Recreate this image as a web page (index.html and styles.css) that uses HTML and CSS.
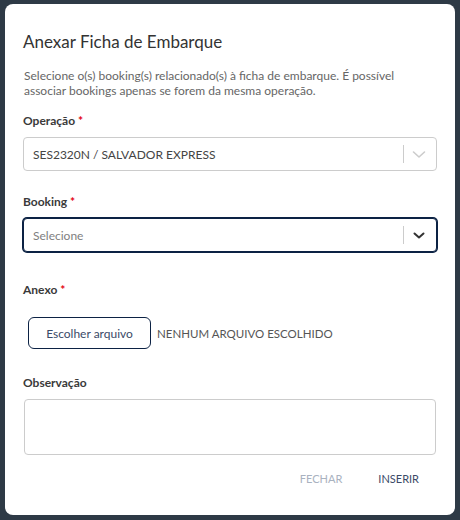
FILE: index.html
```html
<!DOCTYPE html>
<html lang="pt-BR">
<head>
  <meta charset="UTF-8">
  <meta name="viewport" content="width=device-width, initial-scale=1.0">
  <title>Anexar Ficha de Embarque</title>
  <link rel="stylesheet" href="styles.css">
</head>
<body>
  <div class="modal">
    <h2 class="modal-title">Anexar Ficha de Embarque</h2>
    <p class="modal-text">Selecione o(s) booking(s) relacionado(s) à ficha de embarque. É possível associar bookings apenas se forem da mesma operação.</p>

    <!-- Operação -->
    <div class="field">
      <label class="field-label">Operação <span class="required">*</span></label>
      <div class="select">
        <div class="select-value">SES2320N / SALVADOR EXPRESS</div>
        <span class="select-separator"></span>
        <div class="select-indicator">
          <svg width="20" height="20" viewBox="0 0 20 20"><polyline points="4.5,8 10,13 15.5,8" fill="none" stroke="#cccccc" stroke-width="1.6" stroke-linecap="round" stroke-linejoin="round"/></svg>
        </div>
      </div>
    </div>

    <!-- Booking -->
    <div class="field">
      <label class="field-label">Booking <span class="required">*</span></label>
      <div class="select select-focused">
        <div class="select-value placeholder">Selecione</div>
        <span class="select-separator"></span>
        <div class="select-indicator">
          <svg width="20" height="20" viewBox="0 0 20 20"><polyline points="5.5,8.5 10,12.5 14.5,8.5" fill="none" stroke="#333333" stroke-width="2" stroke-linecap="round" stroke-linejoin="round"/></svg>
        </div>
      </div>
    </div>

    <!-- Anexo -->
    <div class="field field-file">
      <label class="field-label">Anexo <span class="required">*</span></label>
      <div class="file-row">
        <button type="button" class="file-button">Escolher arquivo</button>
        <span class="file-name">NENHUM ARQUIVO ESCOLHIDO</span>
      </div>
    </div>

    <!-- Observação -->
    <div class="field field-obs">
      <label class="field-label">Observação</label>
      <textarea class="textarea"></textarea>
    </div>

    <div class="modal-actions">
      <button type="button" class="action action-disabled">FECHAR</button>
      <button type="button" class="action">INSERIR</button>
    </div>
  </div>
</body>
</html>
```

FILE: styles.css
```css
body {
  margin: 0;
  padding: 4px 5px;
  background-color: #2e3a46;
  font-family: Lato, "Open Sans", sans-serif;
}

.modal {
  background-color: #fff;
  border-radius: 8px;
  width: 450px;
  height: 511px;
  box-sizing: border-box;
  padding: 26px 18px 0 18px;
}

.modal-title {
  margin: 0;
  font-size: 17px;
  line-height: 24px;
  font-weight: 400;
  color: #333;
}

.modal-text {
  margin: 14px 0 0 1px;
  font-size: 12px;
  line-height: 15px;
  color: #666;
}

.field {
  margin-top: 15px;
}

.field + .field {
  margin-top: 23px;
}

.field-label {
  display: block;
  font-size: 12px;
  line-height: 16px;
  font-weight: 700;
  color: #3a3a3a;
  margin-bottom: 8px;
}

.required {
  color: #e3000f;
}

.select {
  display: flex;
  align-items: center;
  height: 34px;
  box-sizing: border-box;
  border: 1px solid #cccccc;
  border-radius: 4px;
  background-color: #fff;
}

.select-focused {
  border-color: #0c2244;
  box-shadow: 0 0 0 1px #0c2244;
}

.select-value {
  flex: 1;
  padding: 0 9px;
  font-size: 12px;
  color: #444;
}

.select-value.placeholder {
  color: #808080;
}

.select-separator {
  width: 1px;
  height: 18px;
  background-color: #cccccc;
}

.select-indicator {
  display: flex;
  padding: 0 7px 0 5px;
}

.field + .field-file {
  margin-top: 30px;
}

.field-file .field-label {
  margin-bottom: 19px;
}

.file-row {
  display: flex;
  align-items: center;
  padding-left: 5px;
}

.file-button {
  width: 123px;
  height: 32px;
  border: 1.5px solid #0c2244;
  border-radius: 6px;
  background-color: #fff;
  font-family: inherit;
  font-size: 12px;
  color: #3b4a68;
  cursor: pointer;
}

.file-name {
  margin-left: 6px;
  font-size: 11.5px;
  color: #555;
}

.field + .field-obs {
  margin-top: 26px;
}

.textarea {
  display: block;
  width: 412px;
  height: 56px;
  margin-left: 1px;
  box-sizing: border-box;
  border: 1px solid #cccccc;
  border-radius: 4px;
  resize: none;
  font-family: inherit;
}

.modal-actions {
  display: flex;
  justify-content: flex-end;
  margin-top: 5px;
}

.action {
  height: 36px;
  padding: 0 18px;
  border: none;
  background: none;
  font-family: inherit;
  font-size: 11px;
  color: #3b4a68;
  cursor: pointer;
}

.action-disabled {
  color: #a9b2c0;
  cursor: default;
}
```
